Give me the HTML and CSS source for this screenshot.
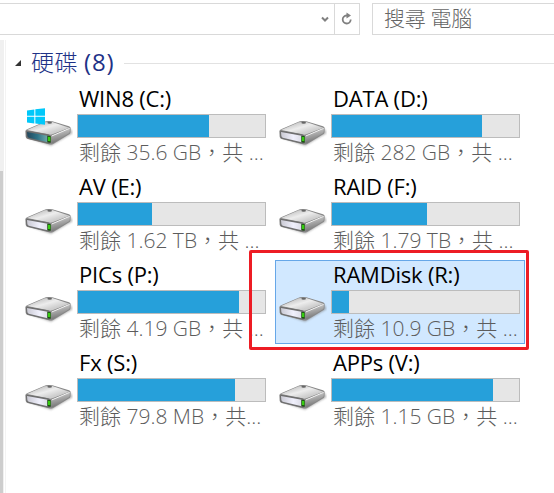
FILE: index.html
```html
<!DOCTYPE html>
<html lang="zh-Hant">
<head>
    <meta charset="UTF-8">
    <meta name="viewport" content="width=device-width, initial-scale=1.0">
    <title>電腦</title>
    <link rel="stylesheet" href="styles.css">
</head>
<body>
    <!-- Shared icons -->
    <svg class="defs" width="0" height="0">
        <defs>
            <linearGradient id="top" x1="0" y1="0" x2="1" y2="1">
                <stop offset="0" stop-color="#a8a8a8"/>
                <stop offset="0.45" stop-color="#ededed"/>
                <stop offset="0.7" stop-color="#cfcfcf"/>
                <stop offset="1" stop-color="#c4c4c4"/>
            </linearGradient>
            <linearGradient id="side" x1="0" y1="0" x2="0.3" y2="1">
                <stop offset="0" stop-color="#dedede"/>
                <stop offset="1" stop-color="#707070"/>
            </linearGradient>
            <linearGradient id="front" x1="0" y1="0" x2="1" y2="0">
                <stop offset="0" stop-color="#cacad4"/>
                <stop offset="0.6" stop-color="#f0f0fc"/>
                <stop offset="1" stop-color="#dcdce6"/>
            </linearGradient>
            <linearGradient id="front-system" x1="0" y1="0" x2="1" y2="0">
                <stop offset="0" stop-color="#23475c"/>
                <stop offset="0.5" stop-color="#2d7387"/>
                <stop offset="1" stop-color="#70a9a9"/>
            </linearGradient>
            <filter id="soft" x="-20%" y="-20%" width="140%" height="140%">
                <feGaussianBlur stdDeviation="2.5"/>
            </filter>
        </defs>
        <symbol id="drive" viewBox="0 0 144 126">
            <path d="M4 94 L78 119 L142 82 L138 70 Z" fill="#777" opacity="0.6" filter="url(#soft)"/>
            <path d="M1 76 Q1 71 8 69 L57 48 Q62 45 70 45 L82 46 L132 61 Q138 63 137 69 L136 80 Q135 84 130 86 L86 113 Q79 117 72 115 L8 99 Q3 97 2 92 Z" fill="#888"/>
            <path d="M6 72 L59 49 Q65 47 82 48 L133 65 L82 85 Q76 87 70 85 Z" fill="url(#top)"/>
            <path d="M79 90 L135 67 L134 79 Q133 82 128 84 L86 110 L79 112 Z" fill="url(#side)"/>
            <path d="M80 90 L134 67" fill="none" stroke="#f2f2f2" stroke-width="3"/>
            <ellipse cx="74" cy="50" rx="7" ry="3" fill="#666"/>
            <path d="M3 77 Q3 74 7 74 L69 85 Q77 87 77 94 L77 108 Q77 114 70 113 L9 98 Q5 97 4 93 Z" fill="#6e6e6e"/>
            <path d="M6 78 L68 89 L68 109 L11 95 Q8 94 7 90 Z"/>
            <path d="M67 89 L77 91 L77 110 L67 109 Z" fill="#164b0d"/>
            <path d="M69 92 L76 93 L76 106 L69 105 Z" fill="#36cc10"/>
        </symbol>
        <symbol id="windows" viewBox="0 0 54 50">
            <path d="M0 7 L22 4 V23 H0 Z M25 3 L54 0 V23 H25 Z M0 26 H22 V46 L0 43 Z M25 26 H54 V50 L25 46 Z" fill="#00c8fa"/>
        </symbol>
    </svg>

    <header class="toolbar">
        <div class="address">
            <div class="dropdown">
                <svg width="8" height="7" viewBox="0 0 8 7"><path d="M1 1.5 L4 4.5 L7 1.5" fill="none" stroke="#808080" stroke-width="2"/></svg>
            </div>
            <div class="refresh">
                <svg width="12" height="14" viewBox="0 0 12 14"><path d="M6.5 3.5 H5.5 A4 4 0 1 0 9.7 7.5" fill="none" stroke="#808080" stroke-width="1.8"/><path d="M5.5 0.5 L10 3.5 L5.5 6.5 Z" fill="#808080"/></svg>
            </div>
        </div>
        <div class="search">搜尋 電腦</div>
    </header>

    <main class="content">
        <div class="scrollbar"><div class="thumb"></div></div>
        <section class="group">
            <div class="group-header">
                <svg class="arrow" width="6" height="6" viewBox="0 0 6 6"><path d="M6 0 V6 H0 Z" fill="#333"/></svg>
                <h1><span class="group-name">硬碟</span> <span class="count">(8)</span></h1>
                <div class="rule"></div>
            </div>
            <div class="drives">
                <div class="tile system">
                    <div class="icon"><svg class="disk"><use href="#drive"/></svg><svg class="logo"><use href="#windows"/></svg></div>
                    <div class="info">
                        <div class="name">WIN8 (C:)</div>
                        <div class="bar"><div class="used" style="width: 70%"></div></div>
                        <div class="free">剩餘 35.6 GB，共 ...</div>
                    </div>
                </div>
                <div class="tile">
                    <div class="icon"><svg class="disk"><use href="#drive"/></svg></div>
                    <div class="info">
                        <div class="name">DATA (D:)</div>
                        <div class="bar"><div class="used" style="width: 80.2%"></div></div>
                        <div class="free">剩餘 282 GB，共 ...</div>
                    </div>
                </div>
                <div class="tile">
                    <div class="icon"><svg class="disk"><use href="#drive"/></svg></div>
                    <div class="info">
                        <div class="name">AV (E:)</div>
                        <div class="bar"><div class="used" style="width: 39.6%"></div></div>
                        <div class="free">剩餘 1.62 TB，共 ...</div>
                    </div>
                </div>
                <div class="tile">
                    <div class="icon"><svg class="disk"><use href="#drive"/></svg></div>
                    <div class="info">
                        <div class="name">RAID (F:)</div>
                        <div class="bar"><div class="used" style="width: 50.8%"></div></div>
                        <div class="free">剩餘 1.79 TB，共 ...</div>
                    </div>
                </div>
                <div class="tile">
                    <div class="icon"><svg class="disk"><use href="#drive"/></svg></div>
                    <div class="info">
                        <div class="name">PICs (P:)</div>
                        <div class="bar"><div class="used" style="width: 86.1%"></div></div>
                        <div class="free">剩餘 4.19 GB，共 ...</div>
                    </div>
                </div>
                <div class="tile selected">
                    <div class="icon"><svg class="disk"><use href="#drive"/></svg></div>
                    <div class="info">
                        <div class="name">RAMDisk (R:)</div>
                        <div class="bar"><div class="used" style="width: 9.1%"></div></div>
                        <div class="free">剩餘 10.9 GB，共 ...</div>
                    </div>
                    <div class="marker"></div>
                </div>
                <div class="tile">
                    <div class="icon"><svg class="disk"><use href="#drive"/></svg></div>
                    <div class="info">
                        <div class="name">Fx (S:)</div>
                        <div class="bar"><div class="used" style="width: 84%"></div></div>
                        <div class="free">剩餘 79.8 MB，共...</div>
                    </div>
                </div>
                <div class="tile">
                    <div class="icon"><svg class="disk"><use href="#drive"/></svg></div>
                    <div class="info">
                        <div class="name">APPs (V:)</div>
                        <div class="bar"><div class="used" style="width: 86.1%"></div></div>
                        <div class="free">剩餘 1.15 GB，共 ...</div>
                    </div>
                </div>
            </div>
        </section>
    </main>
</body>
</html>
```
FILE: styles.css
```css
* {
    box-sizing: border-box;
}
body {
    margin: 0;
    height: 493px;
    overflow: hidden;
    background: #fff;
    font-family: "Open Sans", "Noto Sans CJK TC", sans-serif;
    font-weight: 300;
    display: flex;
    flex-direction: column;
}
svg {
    display: block;
}
.defs {
    position: absolute;
}
.toolbar {
    display: flex;
    gap: 12px;
    height: 40px;
    padding-top: 3px;
}
.address {
    display: flex;
    justify-content: flex-end;
    width: 360px;
    height: 32px;
    border: 1px solid #d9d9d9;
    border-left: none;
}
.dropdown {
    display: flex;
    align-items: center;
    padding: 1px 5px 0 0;
}
.refresh {
    display: flex;
    align-items: center;
    justify-content: center;
    width: 25px;
    border-left: 1px solid #d9d9d9;
}
.search {
    flex: 1;
    height: 32px;
    padding-left: 11px;
    border: 1px solid #d9d9d9;
    border-right: none;
    font-size: 21px;
    letter-spacing: -0.3px;
    line-height: 28px;
    color: #666;
}
.content {
    flex: 1;
    display: flex;
}
.scrollbar {
    width: 6px;
    padding: 131px 1px 0 0;
    background: linear-gradient(to right, #f0f0f0 4px, #fff 4px, #fff 5px, #f3f3f3 5px);
    display: flex;
}
.thumb {
    width: 3px;
    background: #cdcdcd;
}
.group {
    flex: 1;
}
.group-header {
    display: flex;
    align-items: center;
    height: 44px;
    padding: 3px 0 0 9px;
}
.arrow {
    margin: -2px 10px 0 0;
}
h1 {
    margin: -3px 0 0;
    font-size: 23px;
    font-weight: 300;
    line-height: 30px;
    color: #1e3287;
    white-space: nowrap;
}
.group-name {
    letter-spacing: 0.5px;
}
.count {
    font-size: 24px;
    font-weight: 400;
    letter-spacing: 0.9px;
}
.rule {
    flex: 1;
    height: 1px;
    margin: 0 0 0 9px;
    background: #e2e2e2;
}
.drives {
    display: grid;
    grid-template-columns: 250px 250px;
    gap: 4px;
    padding-left: 15px;
}
.tile {
    display: flex;
    height: 84px;
    padding: 1px;
    border: 1px solid transparent;
    position: relative;
}
.selected {
    background: #d1e8ff;
    border-color: #66a7e8;
}
.icon {
    position: relative;
    width: 54px;
    padding: 20px 0 0 2px;
}
.disk {
    width: 48px;
    height: 42px;
    fill: url(#front);
}
.system .disk {
    fill: url(#front-system);
}
.logo {
    position: absolute;
    left: 4px;
    top: 22px;
    width: 18px;
    height: 17px;
}
.info {
    width: 189px;
}
.name, .free {
    padding-left: 2px;
    white-space: nowrap;
}
.name {
    height: 28px;
    font-size: 22px;
    font-weight: 400;
    letter-spacing: -0.2px;
    line-height: 24px;
    color: #000;
}
.bar {
    height: 24px;
    border: 1px solid #bcbcbc;
    background: #e6e6e6;
}
.used {
    height: 22px;
    background: #26a0da;
}
.free {
    height: 28px;
    font-size: 21px;
    line-height: 28px;
    color: #5c5c5c;
}
/* red frame around the RAM disk */
.marker {
    position: absolute;
    left: -27px;
    top: -11px;
    width: 280px;
    height: 100px;
    border: 3px solid #ed1c24;
    border-radius: 2px;
}
```
